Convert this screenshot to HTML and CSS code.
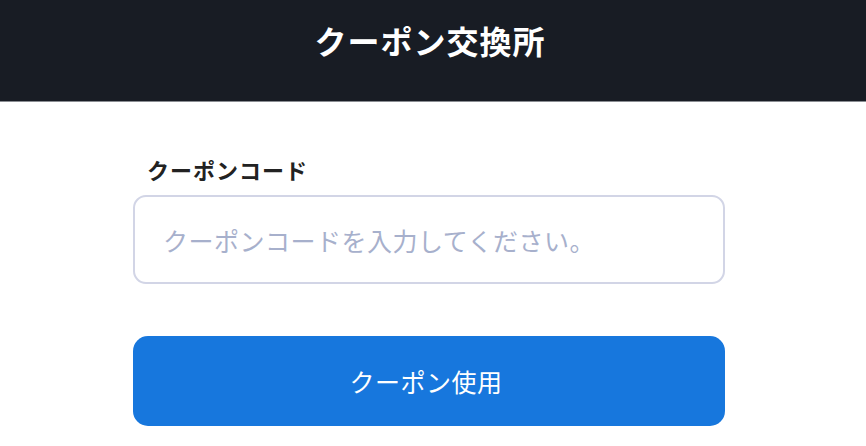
FILE: index.html
```html
<!DOCTYPE html>
<html lang="ja">
<head>
<meta charset="utf-8">
<link rel="stylesheet" href="styles.css">
</head>
<body>
<header class="topbar"><h1 class="title">クーポン交換所</h1></header>
<main class="content">
  <label class="label" for="code">クーポンコード</label>
  <div class="field"><input id="code" class="input" type="text" placeholder="クーポンコードを入力してください。"></div>
  <button class="btn">クーポン使用</button>
</main>
</body>
</html>
```
FILE: styles.css
```css
html, body { margin: 0; padding: 0; background: #fff; }
body { font-family: "Noto Sans CJK JP", "Noto Sans", sans-serif; width: 866px; height: 446px; overflow: hidden; }
.topbar {
  width: 866px;
  height: 101px;
  background: #181c24;
  border-bottom: 1px solid #8a8d92;
  display: flex;
  align-items: center;
  justify-content: center;
}
.title {
  margin: 0;
  color: #fff;
  font-size: 32px;
  font-weight: 700;
  letter-spacing: 1px;
  padding-right: 6px;
  line-height: 1;
  margin-top: -22px;
}
.content {
  width: 592px;
  margin-left: 133px;
  padding-top: 54px;
  display: flex;
  flex-direction: column;
}
.label {
  font-size: 22px;
  font-weight: 700;
  color: #222;
  padding-left: 14px;
  letter-spacing: 1px;
  line-height: 28px;
  height: 28px;
  margin-top: -1px;
}
.field { margin-top: 12px; }
.input {
  box-sizing: border-box;
  width: 592px;
  height: 89px;
  border: 2px solid #d2d5e6;
  border-radius: 13px;
  padding: 0 0 0 28px;
  font-family: inherit;
  font-size: 25px;
  letter-spacing: 0.5px;
  color: #333;
  outline: none;
}
.input::placeholder { color: #a7b0cc; }
.btn {
  margin-top: 52px;
  width: 592px;
  height: 90px;
  border: none;
  border-radius: 15px;
  background: #1777dd;
  color: #fff;
  font-family: inherit;
  font-size: 25px;
  letter-spacing: 0.5px;
  padding: 0;
  padding-right: 6px;
}
```
